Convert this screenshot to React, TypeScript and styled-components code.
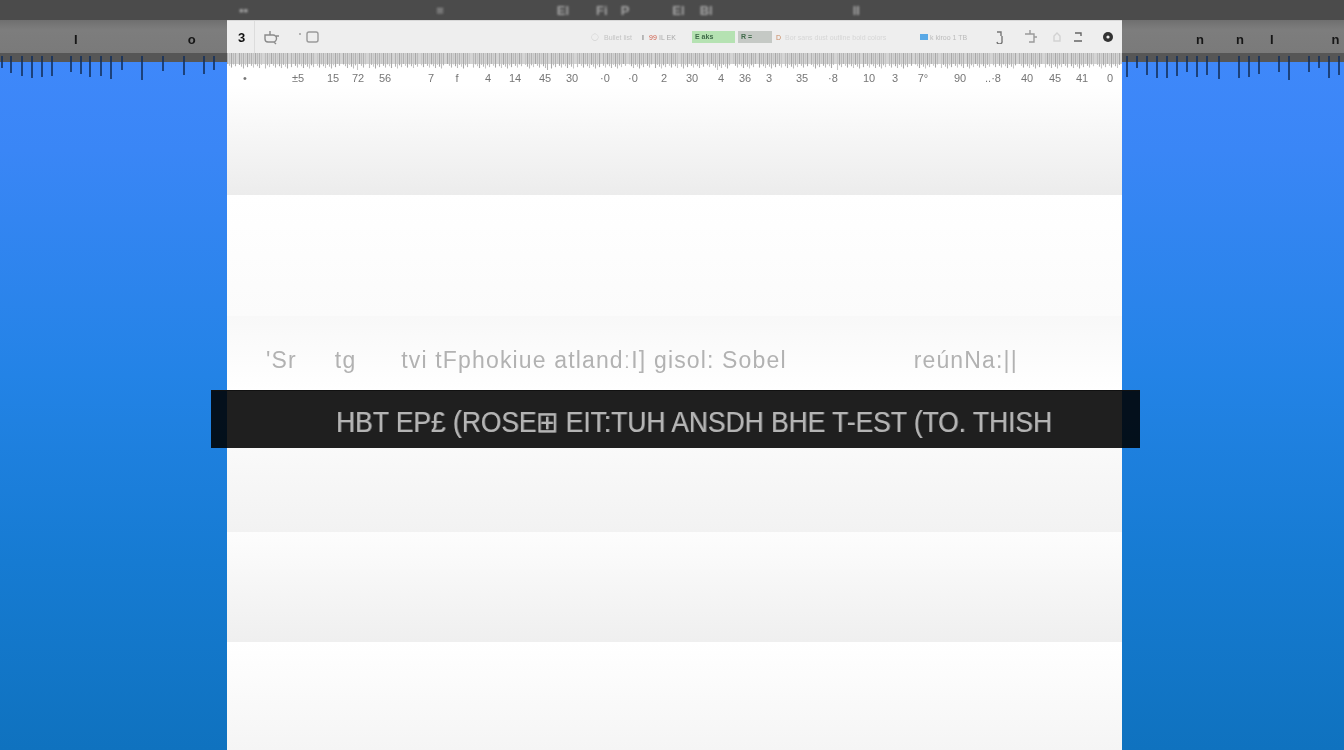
import styled, { createGlobalStyle } from "styled-components";

const GlobalStyle = createGlobalStyle`
    html, body {
        margin: 0;
        padding: 0;
        overflow: hidden;
    }
    body {
        font-family: "Liberation Sans", Arial, sans-serif;
    }
`;

const Screen = styled.div`
    position: relative;
    width: 1344px;
    height: 750px;
    overflow: hidden;
    background: linear-gradient(180deg, #4289fd 0%, #3a86f6 20%, #2383e6 50%, #167bd2 75%, #0f72bf 100%);
`;

const TopBar = styled.div`
    display: flex;
    align-items: center;
    height: 20px;
    background: #4b4b4b;
    color: #a4a4a4;
    font-size: 13px;
    font-weight: bold;
`;

const TopGlyph = styled.span<{ $left: number }>`
    margin-left: ${props => props.$left}px;
    filter: blur(0.8px);
    white-space: nowrap;
`;

const Workspace = styled.div`
    display: grid;
    grid-template-columns: 227px 895px 222px;
    height: 730px;
`;

const Side = styled.div`
    display: flex;
    flex-direction: column;
`;

const SideTools = styled.div`
    display: flex;
    align-items: center;
    height: 33px;
    background: linear-gradient(180deg, #6f6f6f 0%, #7d7d7d 30%, #7a7a7a 100%);
    color: #161616;
    font-size: 13px;
    font-weight: bold;
`;

const SideGlyph = styled.span<{ $left: number }>`
    margin-left: ${props => props.$left}px;
    margin-top: 6px;
    filter: blur(0.5px);
    line-height: 1;
`;

const SideRuler = styled.svg`
    display: block;
    width: 100%;
    height: 27px;
    filter: blur(0.5px);
`;

const Page = styled.div`
    display: flex;
    flex-direction: column;
    background: #fff;
`;

const PageTools = styled.div`
    display: flex;
    align-items: center;
    height: 33px;
    box-sizing: border-box;
    border-top: 1px solid #d8d8d8;
    background: #eeeeee;
    color: #333;
    font-size: 8px;
`;

const ActiveTool = styled.div`
    display: flex;
    align-items: center;
    justify-content: center;
    box-sizing: border-box;
    width: 28px;
    height: 32px;
    padding-left: 2px;
    border-right: 1px solid #dcdcdc;
    color: #111;
    font-size: 13px;
    font-weight: bold;
    filter: blur(0.5px);
`;

const ToolIcon = styled.svg<{ $left: number }>`
    flex: none;
    margin-left: ${props => props.$left}px;
    filter: blur(0.6px);
`;

const Faint = styled.span<{ $left: number; $width: number; $color?: string }>`
    flex: none;
    width: ${props => props.$width}px;
    margin-left: ${props => props.$left}px;
    overflow: hidden;
    color: ${props => props.$color || "#c4c4c4"};
    font-size: 7px;
    white-space: nowrap;
    filter: blur(0.6px);
`;

const Pill = styled.span<{ $left: number; $width: number; $bg: string; $height?: number }>`
    flex: none;
    box-sizing: border-box;
    width: ${props => props.$width}px;
    height: ${props => props.$height || 12}px;
    margin-left: ${props => props.$left}px;
    padding: 0 3px;
    overflow: hidden;
    background: ${props => props.$bg};
    color: #3f6a49;
    font-size: 7px;
    font-weight: bold;
    line-height: 12px;
    white-space: nowrap;
    filter: blur(0.7px);
`;

const PageRuler = styled.svg`
    display: block;
    width: 895px;
    height: 17px;
    filter: blur(0.6px);
`;

const Numbers = styled.div`
    display: flex;
    align-items: center;
    height: 15px;
    color: #767676;
    font-size: 11px;
`;

const NumberLabel = styled.span<{ $left: number }>`
    flex: none;
    width: 20px;
    margin-left: ${props => props.$left}px;
    text-align: center;
    white-space: nowrap;
    filter: blur(0.7px);
`;

const Band = styled.div<{ $height: number; $from: string; $to: string }>`
    flex: none;
    height: ${props => props.$height}px;
    background: linear-gradient(180deg, ${props => props.$from}, ${props => props.$to});
`;

const FadedRow = styled.div`
    display: flex;
    align-items: center;
    padding-top: 33px;
    height: 22px;
    color: #b2b2b2;
    font-size: 23px;
    letter-spacing: 1.15px;
    white-space: nowrap;
`;

const FadedText = styled.span<{ $left: number }>`
    margin-left: ${props => props.$left}px;
    filter: blur(0.7px);
`;

const Caption = styled.div`
    position: absolute;
    top: 390px;
    left: 211px;
    display: flex;
    align-items: center;
    box-sizing: border-box;
    width: 929px;
    height: 58px;
    padding: 4px 0 0 125px;
    border-top: 1px solid #111;
    background: rgba(0, 0, 0, 0.88);
    color: #b4b4b4;
    font-size: 29px;
    white-space: nowrap;
`;

const CaptionText = styled.span`
    display: inline-block;
    transform: scaleX(0.91);
    transform-origin: left center;
    filter: blur(0.7px);
    text-shadow: 1px 0 0 rgba(190, 190, 190, 0.45);
`;

type Tick = [number, number];

const leftTicks: Tick[] = [
    [2, 68], [11, 73], [22, 76], [32, 78], [42, 77], [52, 76], [71, 72], [81, 74],
    [90, 77], [101, 76], [111, 79], [122, 70], [142, 81], [163, 71], [184, 75], [204, 74], [214, 70],
];

const rightTicks: Tick[] = [
    [5, 77], [15, 68], [25, 75], [35, 78], [45, 78], [55, 76], [65, 72], [75, 77],
    [85, 75], [97, 79], [117, 78], [127, 77], [137, 74], [157, 72], [167, 80], [187, 72],
    [197, 68], [207, 78], [217, 75],
];

const longTicks = [36, 37, 130, 320, 335, 490, 610, 825, 960, 985];

const rulerTicks = Array.from({ length: 447 }, (_, i) => i).filter(i => i % 13 !== 5).map(i => ({
    x: i * 2 + 0.5,
    end: longTicks.some(long => Math.abs(long - i * 2) < 1) ? 17 : 11 + ((i * 37) % 11) * 0.45,
    color: ["#b2b2b2", "#bcbcbc", "#a8a8a8", "#c6c6c6"][(i * 7) % 4],
}));

// centre of each ruler number, measured from the page's left edge
const numbers: [string, number][] = [
    ["•", 18], ["±5", 71], ["15", 106], ["72", 131], ["56", 158], ["7", 204], ["f", 230], ["4", 261],
    ["14", 288], ["45", 318], ["30", 345], ["·0", 378], ["·0", 406], ["2", 437], ["30", 465], ["4", 494],
    ["36", 518], ["3", 542], ["35", 575], ["·8", 606], ["10", 642], ["3", 668], ["7°", 696], ["90", 733],
    ["..·8", 766], ["40", 800], ["45", 828], ["41", 855], ["0", 883],
];

function SideRulerTicks({ ticks }: { ticks: Tick[] }) {
    return (
        <SideRuler viewBox="0 0 227 27" preserveAspectRatio="xMinYMin slice">
            <rect x="0" y="0" width="227" height="9" fill="#565656" />
            {ticks.map(([x, end]) => (
                <line key={x} x1={x} x2={x} y1="3" y2={end - 53} stroke="#14305c" strokeWidth="1.6" />
            ))}
        </SideRuler>
    );
}

function App() {
    return (
        <Screen>
            <GlobalStyle />
            <TopBar>
                <TopGlyph $left={239}>▪▪</TopGlyph>
                <TopGlyph $left={188}>≡</TopGlyph>
                <TopGlyph $left={113}>El</TopGlyph>
                <TopGlyph $left={27}>Fi</TopGlyph>
                <TopGlyph $left={13}>P</TopGlyph>
                <TopGlyph $left={43}>El</TopGlyph>
                <TopGlyph $left={15}>Bl</TopGlyph>
                <TopGlyph $left={140}>II</TopGlyph>
            </TopBar>
            <Workspace>
                <Side>
                    <SideTools>
                        <SideGlyph $left={74}>I</SideGlyph>
                        <SideGlyph $left={110}>o</SideGlyph>
                    </SideTools>
                    <SideRulerTicks ticks={leftTicks} />
                </Side>
                <Page>
                    <PageTools>
                        <ActiveTool>3</ActiveTool>
                        <ToolIcon $left={7} width="18" height="16" viewBox="0 0 18 16" fill="none" stroke="#8a8a8a" strokeWidth="1.4">
                            <path d="M3 6h8a3 3 0 0 1 0 7H6a3 3 0 0 1-3-3zM8 6V2M14 7h3M12 13l2 2" />
                        </ToolIcon>
                        <ToolIcon $left={18} width="22" height="14" viewBox="0 0 22 14" fill="none" stroke="#9a9a9a" strokeWidth="1.4">
                            <path d="M2 3v2" />
                            <rect x="9" y="2" width="11" height="10" rx="2" />
                        </ToolIcon>
                        <Faint $left={271} $width={10} $color="#d0d0d0">◯</Faint>
                        <Faint $left={3} $width={35}>Bullet list</Faint>
                        <Faint $left={3} $width={5} $color="#555">I</Faint>
                        <Faint $left={2} $width={10} $color="#d0604d">99</Faint>
                        <Faint $left={0} $width={26} $color="#a9a9a9">IL EK</Faint>
                        <Pill $left={7} $width={43} $bg="#b5e2b2">E  aks</Pill>
                        <Pill $left={3} $width={34} $bg="#c5c9c5">R  =</Pill>
                        <Faint $left={4} $width={6} $color="#c98a62">D</Faint>
                        <Faint $left={3} $width={108} $color="#d6d6d6">Bor sans dust outline bold colors</Faint>
                        <Pill $left={27} $width={8} $bg="#5aa9e6" $height={6}></Pill>
                        <Faint $left={2} $width={46} $color="#bbb">k kiroo 1 TB</Faint>
                        <ToolIcon $left={18} width="10" height="14" viewBox="0 0 10 14" fill="none" stroke="#777" strokeWidth="1.4">
                            <path d="M3 2h4v4M8 6v5a2 2 0 0 1-5 1" />
                        </ToolIcon>
                        <ToolIcon $left={18} width="16" height="16" viewBox="0 0 16 16" fill="none" stroke="#9a9a9a" strokeWidth="1.4">
                            <path d="M3 5h9v8H7M8 1v4M12 8h3" />
                        </ToolIcon>
                        <ToolIcon $left={14} width="10" height="12" viewBox="0 0 10 12" fill="none" stroke="#d2d2d2" strokeWidth="1.4">
                            <path d="M2 10V5l3-3 3 3v5z" />
                        </ToolIcon>
                        <ToolIcon $left={11} width="10" height="14" viewBox="0 0 10 14" fill="none" stroke="#666" strokeWidth="1.4">
                            <path d="M2 3h6v3M1 11h8" />
                        </ToolIcon>
                        <ToolIcon $left={19} width="12" height="12" viewBox="0 0 12 12" fill="#333">
                            <circle cx="6" cy="6" r="5" />
                            <circle cx="6" cy="6" r="1.6" fill="#eee" />
                        </ToolIcon>
                    </PageTools>
                    <PageRuler viewBox="0 0 895 17">
                        <rect width="895" height="11" fill="#d4d4d4" />
                        {rulerTicks.map(tick => (
                            <line key={tick.x} x1={tick.x} x2={tick.x} y1="0" y2={tick.end} stroke={tick.color} strokeWidth="1.1" />
                        ))}
                    </PageRuler>
                    <Numbers>
                        {numbers.map(([label, centre], i) => (
                            <NumberLabel key={i} $left={i === 0 ? centre - 10 : centre - numbers[i - 1][1] - 20}>
                                {label}
                            </NumberLabel>
                        ))}
                    </Numbers>
                    <Band $height={110} $from="#ffffff" $to="#ececec" />
                    <Band $height={121} $from="#ffffff" $to="#fbfbfb" />
                    <Band $height={74} $from="#f8f8f8" $to="#ffffff">
                        <FadedRow>
                            <FadedText $left={39}>'Sr</FadedText>
                            <FadedText $left={38}>tg</FadedText>
                            <FadedText $left={45}>tvi tFphokiue atlandːI] gisol: Sobel</FadedText>
                            <FadedText $left={127}>reúnNa:||</FadedText>
                        </FadedRow>
                    </Band>
                    <Band $height={142} $from="#ffffff" $to="#f2f2f2" />
                    <Band $height={110} $from="#fdfdfd" $to="#efefef" />
                    <Band $height={108} $from="#ffffff" $to="#f5f5f5" />
                </Page>
                <Side>
                    <SideTools>
                        <SideGlyph $left={74}>n</SideGlyph>
                        <SideGlyph $left={32}>n</SideGlyph>
                        <SideGlyph $left={26}>I</SideGlyph>
                        <SideGlyph $left={58}>n</SideGlyph>
                    </SideTools>
                    <SideRulerTicks ticks={rightTicks} />
                </Side>
            </Workspace>
            <Caption>
                <CaptionText>HBT  EP£ (ROSE⊞ EIT:TUH  ANSDH BHE T-EST (TO. THISH</CaptionText>
            </Caption>
        </Screen>
    );
}

export default App;
